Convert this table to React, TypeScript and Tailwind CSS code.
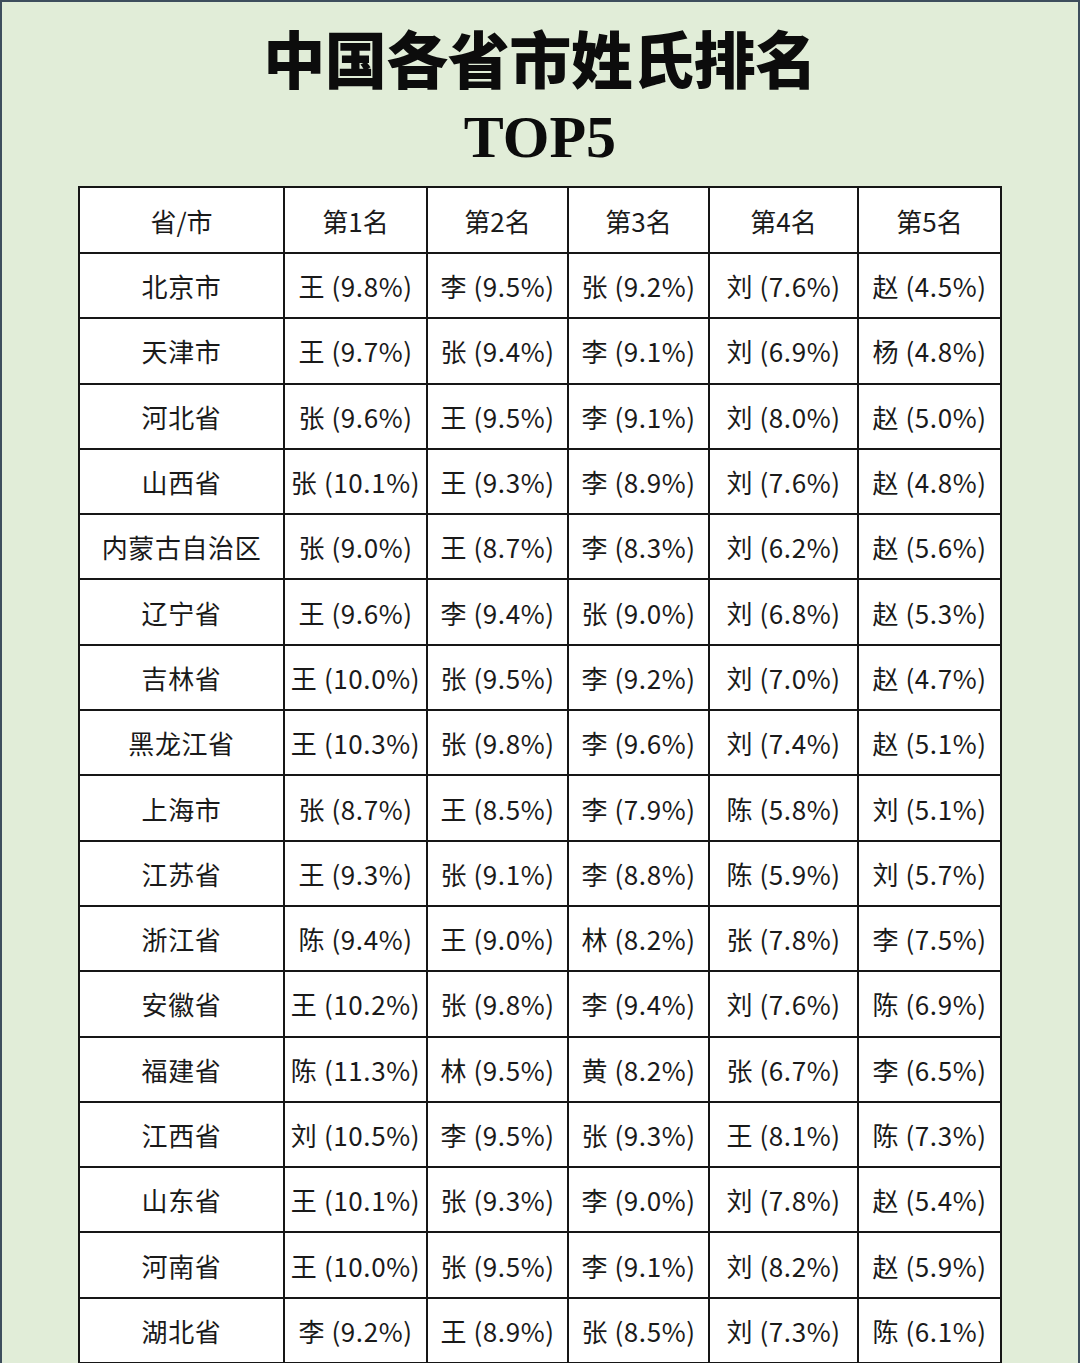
import * as React from "react";

const rows: [string, string, string, string, string, string][] = [
  ["北京市", "王 (9.8%)", "李 (9.5%)", "张 (9.2%)", "刘 (7.6%)", "赵 (4.5%)"],
  ["天津市", "王 (9.7%)", "张 (9.4%)", "李 (9.1%)", "刘 (6.9%)", "杨 (4.8%)"],
  ["河北省", "张 (9.6%)", "王 (9.5%)", "李 (9.1%)", "刘 (8.0%)", "赵 (5.0%)"],
  ["山西省", "张 (10.1%)", "王 (9.3%)", "李 (8.9%)", "刘 (7.6%)", "赵 (4.8%)"],
  ["内蒙古自治区", "张 (9.0%)", "王 (8.7%)", "李 (8.3%)", "刘 (6.2%)", "赵 (5.6%)"],
  ["辽宁省", "王 (9.6%)", "李 (9.4%)", "张 (9.0%)", "刘 (6.8%)", "赵 (5.3%)"],
  ["吉林省", "王 (10.0%)", "张 (9.5%)", "李 (9.2%)", "刘 (7.0%)", "赵 (4.7%)"],
  ["黑龙江省", "王 (10.3%)", "张 (9.8%)", "李 (9.6%)", "刘 (7.4%)", "赵 (5.1%)"],
  ["上海市", "张 (8.7%)", "王 (8.5%)", "李 (7.9%)", "陈 (5.8%)", "刘 (5.1%)"],
  ["江苏省", "王 (9.3%)", "张 (9.1%)", "李 (8.8%)", "陈 (5.9%)", "刘 (5.7%)"],
  ["浙江省", "陈 (9.4%)", "王 (9.0%)", "林 (8.2%)", "张 (7.8%)", "李 (7.5%)"],
  ["安徽省", "王 (10.2%)", "张 (9.8%)", "李 (9.4%)", "刘 (7.6%)", "陈 (6.9%)"],
  ["福建省", "陈 (11.3%)", "林 (9.5%)", "黄 (8.2%)", "张 (6.7%)", "李 (6.5%)"],
  ["江西省", "刘 (10.5%)", "李 (9.5%)", "张 (9.3%)", "王 (8.1%)", "陈 (7.3%)"],
  ["山东省", "王 (10.1%)", "张 (9.3%)", "李 (9.0%)", "刘 (7.8%)", "赵 (5.4%)"],
  ["河南省", "王 (10.0%)", "张 (9.5%)", "李 (9.1%)", "刘 (8.2%)", "赵 (5.9%)"],
  ["湖北省", "李 (9.2%)", "王 (8.9%)", "张 (8.5%)", "刘 (7.3%)", "陈 (6.1%)"],
];

const head = ["省/市", "第1名", "第2名", "第3名", "第4名", "第5名"];
const widths = ["w-[205px]", "w-[143px]", "w-[141px]", "w-[141px]", "w-[149px]", "w-[143px]"];

export default function App() {
  return (
    <div
      className="h-[1363px] w-[1080px] overflow-hidden border-2 border-b-0 border-[#3e4e5d] bg-[#e1edd8]"
      style={{ fontFamily: '"Noto Sans CJK SC", "Noto Sans", sans-serif' }}
    >
      <h1 className="mt-[24px] text-center text-[62px] font-black leading-[62px] tracking-[-0.5px] text-[#0c0c0c]">
        中国各省市姓氏排名
      </h1>
      <div className="mt-[19px] text-center font-['Liberation_Serif',serif] text-[60px] font-bold leading-[60px] text-[#0c0c0c]">
        TOP5
      </div>
      <table className="ml-[76px] mt-[19px] table-fixed border-collapse bg-white text-[26px] text-[#1a1a1a]">
        <colgroup>
          {widths.map((w, i) => (
            <col key={i} className={w} />
          ))}
        </colgroup>
        <thead>
          <tr className="h-[66px]">
            {head.map((h) => (
              <th key={h} className="border-2 border-[#161616] p-0 text-center font-normal whitespace-nowrap">
                {h}
              </th>
            ))}
          </tr>
        </thead>
        <tbody>
          {rows.map((r) => (
            <tr key={r[0]} className="h-[65.3px]">
              {r.map((c, i) => (
                <td key={i} className="border-2 border-[#161616] p-0 text-center whitespace-nowrap tracking-[0.6px]">
                  {c}
                </td>
              ))}
            </tr>
          ))}
        </tbody>
      </table>
    </div>
  );
}
